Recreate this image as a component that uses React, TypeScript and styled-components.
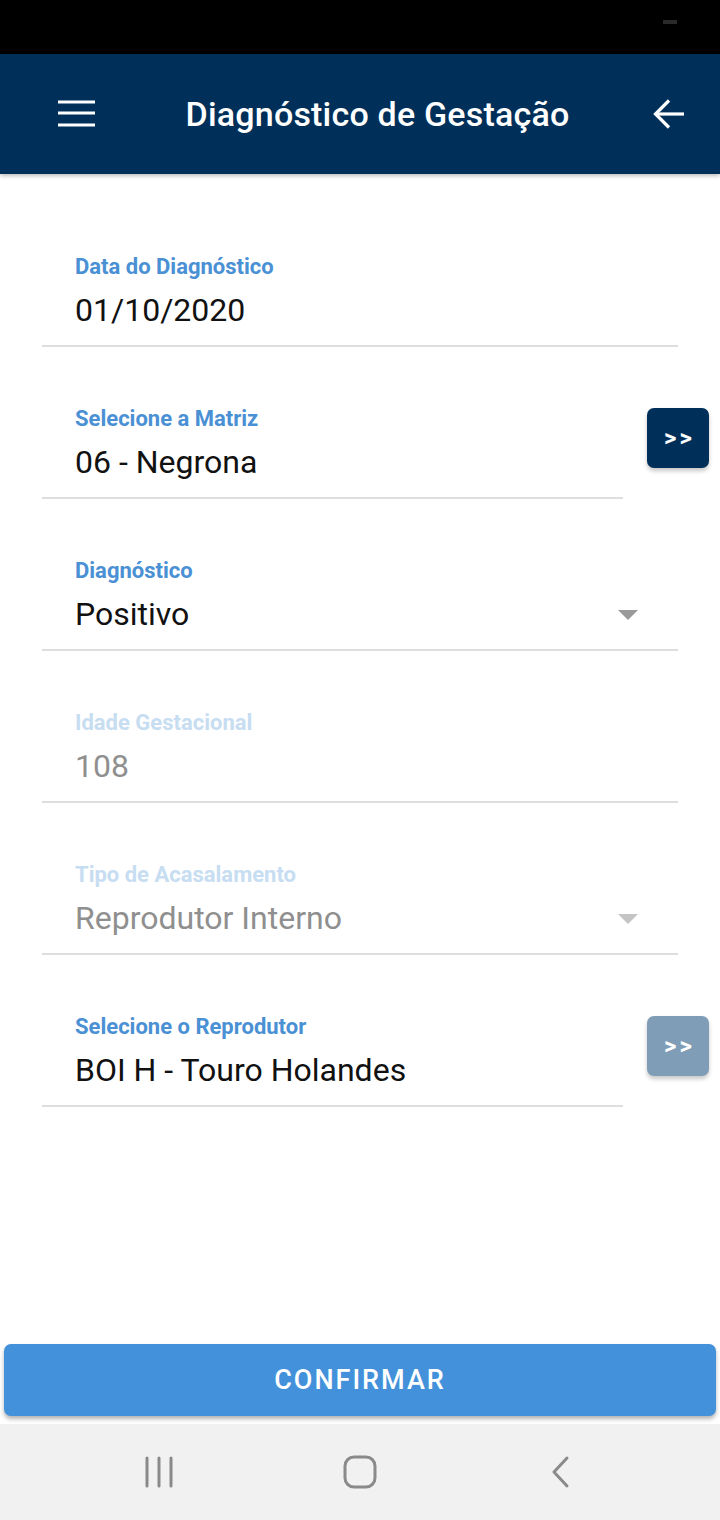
import React from "react";
import styled, { createGlobalStyle } from "styled-components";

const Global = createGlobalStyle`
  html, body { margin: 0; padding: 0; background: #fff; }
  body { font-family: Roboto, "Noto Sans", sans-serif; }
  * { box-sizing: border-box; }
`;

const Page = styled.div`
  display: flex;
  flex-direction: column;
  height: 1520px;
  width: 720px;
  background: #fff;
`;

const StatusBar = styled.div`
  height: 54px;
  background: #000;
  display: flex;
  justify-content: flex-end;
  padding: 20px 43px 0 0;
`;

const StatusMark = styled.div`
  width: 14px;
  height: 4px;
  background: #2a2a2a;
`;

const Header = styled.header`
  height: 120px;
  background: #00305a;
  display: flex;
  align-items: center;
  padding: 0 35px 0 58px;
  box-shadow: 0 2px 4px rgba(0, 0, 0, 0.25);
  position: relative;
  z-index: 1;
`;

const Title = styled.h1`
  flex: 1;
  margin: 0;
  text-align: center;
  color: #fff;
  font-family: Roboto, sans-serif;
  font-weight: 500;
  font-size: 34px;
  letter-spacing: 0.2px;
  padding-left: 6px;
`;

const IconBox = styled.div`
  display: flex;
  align-items: center;
  justify-content: center;
`;

const Form = styled.main`
  flex: 1;
  padding: 80px 0 0 42px;
  display: flex;
  flex-direction: column;
  gap: 59px;
`;

const Row = styled.div<{ $withButton?: boolean }>`
  display: flex;
  align-items: flex-start;
  gap: 24px;
  padding-right: ${(p) => (p.$withButton ? "11px" : "42px")};
`;

const Field = styled.div`
  flex: 1;
  display: flex;
  flex-direction: column;
  gap: 11px;
  padding-bottom: 16px;
  border-bottom: 2px solid #dedede;
`;

const Label = styled.label<{ $disabled?: boolean }>`
  padding-left: 33px;
  font-family: Roboto, sans-serif;
  font-weight: 700;
  font-size: 22px;
  line-height: 26px;
  color: ${(p) => (p.$disabled ? "#c7ddf1" : "#4a90d4")};
`;

const ValueLine = styled.div<{ $disabled?: boolean }>`
  display: flex;
  align-items: center;
  padding: 0 40px 0 33px;
  font-family: Roboto, sans-serif;
  font-size: 32px;
  line-height: 38px;
  color: ${(p) => (p.$disabled ? "#8f8f8f" : "#111")};
`;

const ValueText = styled.span`
  flex: 1;
`;

const Caret = styled.span<{ $disabled?: boolean }>`
  width: 0;
  height: 0;
  border-left: 10px solid transparent;
  border-right: 10px solid transparent;
  border-top: 10px solid ${(p) => (p.$disabled ? "#c4c4c4" : "#9a9a9a")};
  margin-top: 2px;
`;

const SideButton = styled.button<{ $disabled?: boolean }>`
  width: 62px;
  height: 60px;
  margin-top: 2px;
  border: none;
  border-radius: 7px;
  background: ${(p) => (p.$disabled ? "#7f9db6" : "#00305a")};
  color: #fff;
  font-family: Roboto, sans-serif;
  font-weight: 700;
  font-size: 24px;
  letter-spacing: 3px;
  padding: 0 0 0 3px;
  box-shadow: 0 3px 4px rgba(0, 0, 0, 0.22);
`;

const Footer = styled.div`
  padding: 0 4px 8px 4px;
`;

const Confirm = styled.button`
  width: 100%;
  height: 72px;
  border: none;
  border-radius: 7px;
  background: #4291da;
  color: #fff;
  font-family: Roboto, sans-serif;
  font-weight: 500;
  font-size: 27px;
  letter-spacing: 2px;
  box-shadow: 0 3px 4px rgba(0, 0, 0, 0.3);
`;

const NavBar = styled.nav`
  height: 96px;
  background: #f1f1f1;
  display: grid;
  grid-template-columns: repeat(3, 1fr);
  align-items: center;
  justify-items: center;
  padding: 0 59px;
`;

const Menu = () => (
  <svg width="38" height="28" viewBox="0 0 38 28">
    <g stroke="#fff" strokeWidth="3.2">
      <line x1="0" y1="2" x2="37" y2="2" />
      <line x1="0" y1="13" x2="37" y2="13" />
      <line x1="0" y1="25" x2="37" y2="25" />
    </g>
  </svg>
);

const Back = () => (
  <svg width="32" height="32" viewBox="0 0 32 32">
    <g stroke="#fff" strokeWidth="3.2" fill="none" strokeLinecap="butt">
      <line x1="3" y1="16" x2="31" y2="16" />
      <polyline points="16,2.5 2.5,16 16,29.5" />
    </g>
  </svg>
);

const NavRecents = () => (
  <svg width="30" height="32" viewBox="0 0 30 32">
    <g stroke="#8a8a8a" strokeWidth="3" strokeLinecap="round">
      <line x1="3" y1="2" x2="3" y2="30" />
      <line x1="15" y1="2" x2="15" y2="30" />
      <line x1="27" y1="2" x2="27" y2="30" />
    </g>
  </svg>
);

const NavHome = () => (
  <svg width="34" height="34" viewBox="0 0 34 34">
    <rect x="2" y="2" width="30" height="30" rx="9" stroke="#8a8a8a" strokeWidth="3" fill="none" />
  </svg>
);

const NavBack = () => (
  <svg width="22" height="34" viewBox="0 0 22 34">
    <polyline points="17,3 4,17 17,31" stroke="#8a8a8a" strokeWidth="3" fill="none" strokeLinecap="round" strokeLinejoin="round" />
  </svg>
);

export default function App() {
  return (
    <>
      <Global />
      <Page>
        <StatusBar>
          <StatusMark />
        </StatusBar>
        <Header>
          <IconBox>
            <Menu />
          </IconBox>
          <Title>Diagnóstico de Gestação</Title>
          <IconBox>
            <Back />
          </IconBox>
        </Header>
        <Form>
          <Row>
            <Field>
              <Label>Data do Diagnóstico</Label>
              <ValueLine>
                <ValueText>01/10/2020</ValueText>
              </ValueLine>
            </Field>
          </Row>
          <Row $withButton>
            <Field>
              <Label>Selecione a Matriz</Label>
              <ValueLine>
                <ValueText>06 - Negrona</ValueText>
              </ValueLine>
            </Field>
            <SideButton>&gt;&gt;</SideButton>
          </Row>
          <Row>
            <Field>
              <Label>Diagnóstico</Label>
              <ValueLine>
                <ValueText>Positivo</ValueText>
                <Caret />
              </ValueLine>
            </Field>
          </Row>
          <Row>
            <Field>
              <Label $disabled>Idade Gestacional</Label>
              <ValueLine $disabled>
                <ValueText>108</ValueText>
              </ValueLine>
            </Field>
          </Row>
          <Row>
            <Field>
              <Label $disabled>Tipo de Acasalamento</Label>
              <ValueLine $disabled>
                <ValueText>Reprodutor Interno</ValueText>
                <Caret $disabled />
              </ValueLine>
            </Field>
          </Row>
          <Row $withButton>
            <Field>
              <Label>Selecione o Reprodutor</Label>
              <ValueLine>
                <ValueText>BOI H - Touro Holandes</ValueText>
              </ValueLine>
            </Field>
            <SideButton $disabled>&gt;&gt;</SideButton>
          </Row>
        </Form>
        <Footer>
          <Confirm>CONFIRMAR</Confirm>
        </Footer>
        <NavBar>
          <NavRecents />
          <NavHome />
          <NavBack />
        </NavBar>
      </Page>
    </>
  );
}
